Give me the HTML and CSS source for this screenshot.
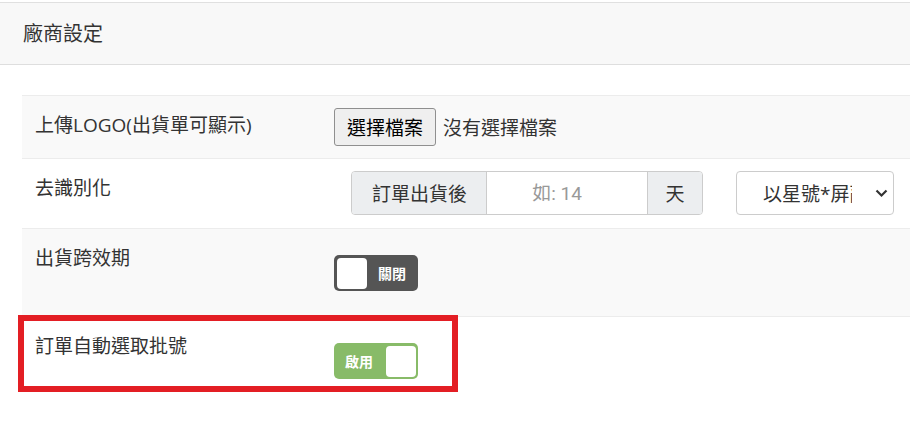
FILE: index.html
```html
<!DOCTYPE html>
<html lang="zh-Hant">
<head>
    <meta charset="UTF-8">
    <title>廠商設定</title>
    <link rel="stylesheet" href="styles.css">
</head>
<body>
<div class="panel">
    <div class="panel-heading">廠商設定</div>
    <div class="panel-body">
        <div class="form-table">
            <div class="form-row odd">
                <div class="form-label">上傳LOGO(出貨單可顯示)</div>
                <div class="form-value upload">
                    <button class="file-btn" type="button">選擇檔案</button>
                    <span class="file-name">沒有選擇檔案</span>
                </div>
            </div>
            <div class="form-row">
                <div class="form-label">去識別化</div>
                <div class="form-value deid">
                    <div class="input-group">
                        <span class="addon">訂單出貨後</span>
                        <input class="days" type="text" placeholder="如: 14">
                        <span class="addon addon-day">天</span>
                    </div>
                    <div class="fake-select">
                        <span class="select-text">以星號*屏蔽</span>
                        <svg class="chevron" width="13" height="9" viewBox="0 0 13 9">
                            <path d="M1.5 1.5 L6.5 6.5 L11.5 1.5" fill="none" stroke="#333" stroke-width="2.2"/>
                        </svg>
                    </div>
                </div>
            </div>
            <div class="form-row odd">
                <div class="form-label">出貨跨效期</div>
                <div class="form-value switch-cell">
                    <div class="switch off">
                        <span class="knob"></span>
                        <span class="switch-text">關閉</span>
                    </div>
                </div>
            </div>
            <div class="form-row marked">
                <div class="form-label">訂單自動選取批號</div>
                <div class="form-value switch-cell">
                    <div class="switch on">
                        <span class="switch-text">啟用</span>
                        <span class="knob"></span>
                    </div>
                </div>
            </div>
        </div>
    </div>
</div>
</body>
</html>
```

FILE: styles.css
```css
* {
    padding: 0;
    margin: 0;
    box-sizing: border-box;
}

body {
    background: #fff;
    color: #333;
    font-family: "Open Sans", "Noto Sans CJK TC", sans-serif;
    font-size: 19px;
    padding-top: 2px;
    overflow: hidden;
}

.panel-heading {
    background: #f8f8f8;
    border-top: 1px solid #e0e0e0;
    border-bottom: 1px solid #dedede;
    padding: 17px 23px 16px;
    font-size: 20px;
    line-height: 28px;
}

.panel-body {
    padding: 30px 0 0 22px;
}

.form-row {
    display: flex;
    border-top: 1px solid #ececec;
}

.form-row.odd {
    background: #f9f9f9;
}

.form-row.marked {
    position: relative;
    height: 88px;
}

/* annotation frame drawn over the last row */
.form-row.marked::after {
    content: "";
    position: absolute;
    left: -4px;
    top: -2px;
    width: 428px;
    height: 65px;
    border: 6px solid #e31e24;
}

.form-label {
    width: 300px;
    flex-shrink: 0;
    padding: 15px 13px;
    line-height: 28px;
}

.form-value {
    flex: 1;
    display: flex;
    align-items: center;
    padding: 12px;
}

.file-btn {
    height: 38px;
    width: 102px;
    font-family: inherit;
    font-size: 19px;
    color: #000;
    background: #efefef;
    border: 1px solid #8f8f8f;
    border-radius: 3px;
}

.file-name {
    margin-left: 7px;
}

.deid {
    padding: 12px 12px 13px 29px;
}

.input-group {
    display: flex;
    height: 44px;
    border: 1px solid #ccc;
    border-radius: 4px;
    overflow: hidden;
}

.addon {
    display: flex;
    align-items: center;
    background: #eceef0;
    padding: 0 19px 0 20px;
}

.addon-day {
    width: 55px;
    justify-content: center;
    padding: 0;
    border-left: 1px solid #ccc;
}

.days {
    width: 161px;
    border: 0;
    border-left: 1px solid #ccc;
    font-family: "Roboto", "Noto Sans CJK TC", sans-serif;
    font-size: 19px;
    text-align: center;
    padding-right: 20px;
    background: #fff;
}

.days::placeholder {
    color: #999;
}

.fake-select {
    display: flex;
    align-items: center;
    margin-left: 33px;
    width: 158px;
    height: 44px;
    border: 1px solid #ccc;
    border-radius: 4px;
    background: #fff;
    padding-left: 26px;
}

.select-text {
    width: 89px;
    overflow: hidden;
    white-space: nowrap;
}

.chevron {
    margin-left: 23px;
}

.switch-cell {
    align-items: flex-start;
    padding-top: 26px;
    padding-bottom: 25px;
}

.switch {
    display: flex;
    align-items: center;
    width: 84px;
    height: 36px;
    border-radius: 5px;
    padding: 0 2px 0 3px;
    color: #fff;
    font-size: 14px;
    font-weight: bold;
}

.switch.off {
    background: #555;
}

.switch.on {
    background: #88bb68;
    justify-content: space-between;
    padding: 0 2px 0 11px;
}

.knob {
    width: 30px;
    height: 31px;
    background: #fff;
    border-radius: 4px;
}

.switch.off .switch-text {
    margin-left: 11px;
}
```
